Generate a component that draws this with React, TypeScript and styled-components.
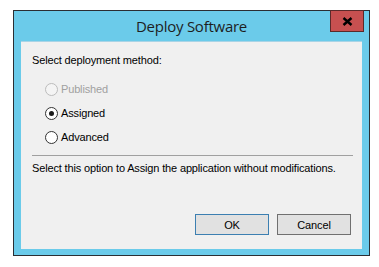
import React from "react";
import styled, { createGlobalStyle } from "styled-components";

const Global = createGlobalStyle`
  html, body { margin: 0; padding: 0; background: #ffffff; }
  body { font-family: "Liberation Sans", Arial, sans-serif; }
`;

const Window = styled.div`
  position: relative;
  box-sizing: border-box;
  margin: 10px 0 0 13px;
  width: 357px;
  height: 246px;
  border: 1px solid #2b2e33;
  background: #6bcbea;
  padding: 0 7px 6px 7px;
  display: flex;
  flex-direction: column;
`;

const TitleBar = styled.div`
  height: 30px;
  display: flex;
  align-items: center;
  justify-content: center;
  font-family: "Open Sans", "Segoe UI", sans-serif;
  font-size: 15px;
  letter-spacing: -0.25px;
  color: #1e1e1e;
  padding-bottom: 1px;
  box-sizing: border-box;
`;

const CloseButton = styled.div`
  position: absolute;
  top: -1px;
  right: 5px;
  width: 34px;
  height: 22px;
  box-sizing: border-box;
  background: #c75050;
  border: 1px solid #5a2a2a;
  display: flex;
  align-items: center;
  justify-content: center;
`;

const Client = styled.div`
  flex: 1;
  background: #f0f0f0;
  border-top: 1px solid #a9d4e6;
  display: flex;
  flex-direction: column;
  padding: 11px 9px 14px 11px;
  font-size: 11px;
  letter-spacing: -0.15px;
  color: #000;
`;

const Label = styled.div`
  line-height: 14px;
  height: 14px;
`;

const RadioGroup = styled.div`
  margin-top: 10px;
  padding-left: 13px;
  display: flex;
  flex-direction: column;
`;

const RadioRow = styled.div<{ $disabled?: boolean }>`
  height: 24px;
  display: flex;
  align-items: center;
  color: ${(p) => (p.$disabled ? "#a0a0a0" : "#000")};
`;

const RadioCircle = styled.span<{ $disabled?: boolean; $checked?: boolean }>`
  box-sizing: border-box;
  width: 13px;
  height: 13px;
  border-radius: 50%;
  border: 1px solid ${(p) => (p.$disabled ? "#bcbcbc" : "#333333")};
  background: ${(p) => (p.$disabled ? "#f4f4f4" : "#ffffff")};
  display: flex;
  align-items: center;
  justify-content: center;
  margin-right: 3px;
  flex-shrink: 0;
  &::after {
    content: "";
    display: ${(p) => (p.$checked ? "block" : "none")};
    width: 5px;
    height: 5px;
    border-radius: 50%;
    background: #1a1a1a;
  }
`;

const Separator = styled.div`
  margin-top: 6px;
  height: 1px;
  background: #a0a0a0;
`;

const Description = styled.div`
  margin-top: 5px;
  line-height: 14px;
  height: 14px;
`;

const Spacer = styled.div`
  flex: 1;
`;

const ButtonRow = styled.div`
  display: flex;
  justify-content: flex-end;
  gap: 8px;
  padding-right: 2px;
`;

const Button = styled.div<{ $default?: boolean }>`
  box-sizing: border-box;
  width: 74px;
  height: 21px;
  background: #e1e1e1;
  border: 1px solid ${(p) => (p.$default ? "#3c7fb1" : "#707070")};
  display: flex;
  align-items: center;
  justify-content: center;
  font-size: 11px;
`;

const options = [
  { label: "Published", disabled: true, checked: false },
  { label: "Assigned", disabled: false, checked: true },
  { label: "Advanced", disabled: false, checked: false },
];

export default function App() {
  return (
    <>
      <Global />
      <Window>
        <TitleBar>Deploy Software</TitleBar>
        <CloseButton>
          <svg width="11" height="9" viewBox="0 0 11 9">
            <path d="M1.5 1 L9.5 8 M9.5 1 L1.5 8" stroke="#000" strokeWidth="2.4" />
          </svg>
        </CloseButton>
        <Client>
          <Label>Select deployment method:</Label>
          <RadioGroup>
            {options.map((o) => (
              <RadioRow key={o.label} $disabled={o.disabled}>
                <RadioCircle $disabled={o.disabled} $checked={o.checked} />
                {o.label}
              </RadioRow>
            ))}
          </RadioGroup>
          <Separator />
          <Description>
            Select this option to Assign the application without modifications.
          </Description>
          <Spacer />
          <ButtonRow>
            <Button $default>OK</Button>
            <Button>Cancel</Button>
          </ButtonRow>
        </Client>
      </Window>
    </>
  );
}
